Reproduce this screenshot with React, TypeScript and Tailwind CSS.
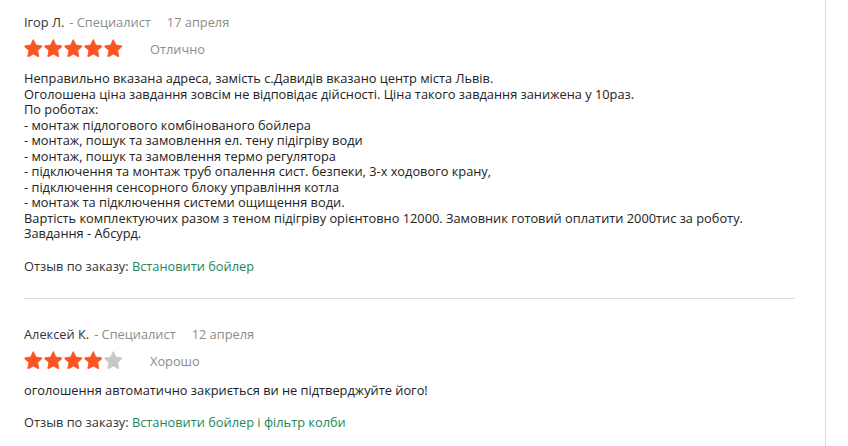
import React from "react";

type Review = {
  name: string;
  date: string;
  rating: number;
  label: string;
  lines: string[];
  order: string;
};

const reviews: Review[] = [
  {
    name: "Ігор Л.",
    date: "17 апреля",
    rating: 5,
    label: "Отлично",
    lines: [
      "Неправильно вказана адреса, замість с.Давидів вказано центр міста Львів.",
      "Оголошена ціна завдання зовсім не відповідає дійсності. Ціна такого завдання занижена у 10раз.",
      "По роботах:",
      "- монтаж підлогового комбінованого бойлера",
      "- монтаж, пошук та замовлення ел. тену підігріву води",
      "- монтаж, пошук та замовлення термо регулятора",
      "- підключення та монтаж труб опалення сист. безпеки, 3-х ходового крану,",
      "- підключення сенсорного блоку управління котла",
      "- монтаж та підключення системи ощищення води.",
      "Вартість комплектуючих разом з теном підігріву орієнтовно 12000. Замовник готовий оплатити 2000тис за роботу.",
      "Завдання - Абсурд.",
    ],
    order: "Встановити бойлер",
  },
  {
    name: "Алексей К.",
    date: "12 апреля",
    rating: 4,
    label: "Хорошо",
    lines: ["оголошення автоматично закриється ви не підтверджуйте його!"],
    order: "Встановити бойлер і фільтр колби",
  },
];

function Star({ on }: { on: boolean }) {
  return (
    <svg width="19" height="18" viewBox="0 0 24 23" className={on ? "text-[#fa5422]" : "text-[#c8c8c8]"}>
      <path
        d="M12 1.2l3.1 6.6 7.1.9c.6.1.8.8.4 1.2l-5.3 4.9 1.4 7.1c.1.6-.5 1-1 .7L12 19.1l-6.3 3.5c-.5.3-1.1-.1-1-.7l1.4-7.1L.8 9.9c-.4-.4-.2-1.1.4-1.2l7.1-.9 3.1-6.6c.2-.5.9-.5 1.1 0z"
        fill="currentColor"
        stroke="currentColor"
        strokeWidth="1"
        strokeLinejoin="round"
      />
    </svg>
  );
}

function ReviewItem({ r }: { r: Review }) {
  return (
    <div className="pt-[13px] pb-[24px]">
      <div className="flex items-center text-[12.8px] leading-[18px]">
        <span className="text-[#333]">{r.name}</span>
        <span className="text-[#8c8c8c] ml-[5px]">- Специалист</span>
        <span className="text-[#8c8c8c] ml-[16px]">{r.date}</span>
      </div>
      <div className="flex items-center mt-[7px] h-[20px]">
        <div className="flex gap-[1px]">
          {[0, 1, 2, 3, 4].map((i) => (
            <Star key={i} on={i < r.rating} />
          ))}
        </div>
        <span className="ml-[27px] mt-[4px] text-[12.8px] text-[#8c8c8c]">{r.label}</span>
      </div>
      <div className="mt-[13px] text-[12.8px] leading-[15.5px] text-[#222]">
        {r.lines.map((l, i) => (
          <div key={i}>{l}</div>
        ))}
      </div>
      <div className="mt-[16px] text-[12.8px] leading-[16px] text-[#333]">
        Отзыв по заказу: <span className="text-[#21875a]">{r.order}</span>
      </div>
    </div>
  );
}

export default function App() {
  return (
    <div
      className="w-[848px] h-[446px] bg-white overflow-hidden flex"
      style={{ fontFamily: '"Open Sans", "Noto Sans", sans-serif' }}
    >
      <div className="w-[826px] border-r border-[#d9d9d9] pl-[24px] pr-[30px]">
        <ReviewItem r={reviews[0]} />
        <div className="border-t border-[#dcdcdc] w-[771px]" />
        <div className="pt-[13px]">
          <ReviewItem r={reviews[1]} />
        </div>
      </div>
    </div>
  );
}
